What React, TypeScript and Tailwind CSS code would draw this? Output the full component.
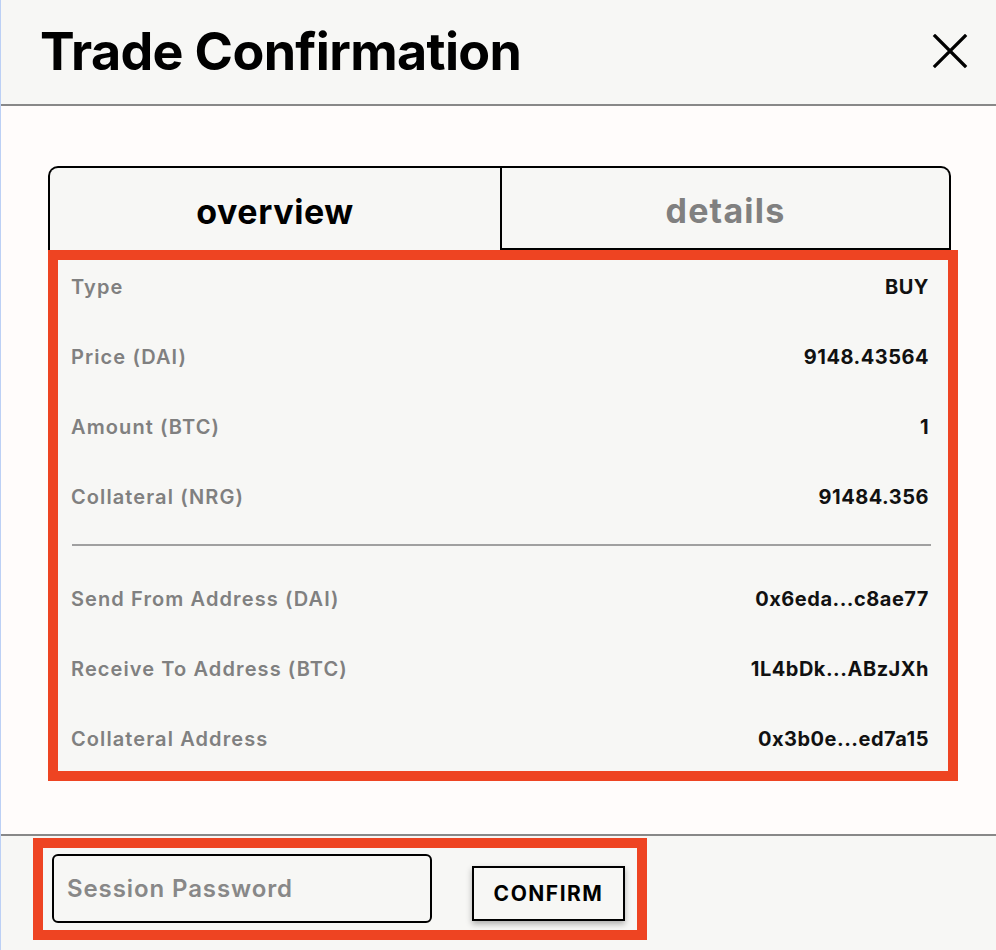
import React from 'react';

const rows = [
  { label: 'Type', value: 'BUY' },
  { label: 'Price (DAI)', value: '9148.43564' },
  { label: 'Amount (BTC)', value: '1' },
  { label: 'Collateral (NRG)', value: '91484.356' },
];

const addressRows = [
  { label: 'Send From Address (DAI)', value: '0x6eda...c8ae77' },
  { label: 'Receive To Address (BTC)', value: '1L4bDk...ABzJXh' },
  { label: 'Collateral Address', value: '0x3b0e...ed7a15' },
];

function Row({ label, value }: { label: string; value: string }) {
  return (
    <div className="h-[54px] flex items-center justify-between pl-[13px] pr-[19px]">
      <span className="text-[20px] font-semibold tracking-[1.1px] text-[#808080]">{label}</span>
      <span className="text-[20px] font-bold tracking-[0.5px] text-[#111]">{value}</span>
    </div>
  );
}

export default function App() {
  return (
    <div className="w-[996px] h-[950px] bg-[#fffcfb] border-l border-[#bcd0f5] flex flex-col font-['Inter',sans-serif] text-black">
      {/* header */}
      <div className="h-[106px] shrink-0 bg-[#f7f7f5] border-b-2 border-[#888] flex items-center justify-between pl-[39px] pr-[28px]">
        <h1 className="text-[52px] font-bold tracking-[-0.65px] leading-none">Trade Confirmation</h1>
        <svg width="36" height="36" viewBox="0 0 36 36">
          <path d="M3 2 L33 32 M33 2 L3 32" stroke="#000" strokeWidth="3.2" strokeLinecap="square" fill="none" />
        </svg>
      </div>

      {/* body */}
      <div className="flex-1 pt-[60px] pl-[47px]">
        <div className="w-[903px] h-[84px] flex">
          <div className="w-[454px] h-full pt-[4px] bg-[#f7f7f5] border-2 border-b-0 border-black rounded-tl-[10px] flex items-center justify-center">
            <span className="text-[34px] font-bold tracking-[0.6px]">overview</span>
          </div>
          <div className="flex-1 h-full pt-[4px] bg-[#f7f7f5] border-2 border-l-0 border-black rounded-tr-[10px] flex items-center justify-center">
            <span className="text-[34px] font-bold tracking-[1.2px] text-[#808080]">details</span>
          </div>
        </div>

        <div className="w-[910px] h-[531px] border-[10px] border-[#ee4422] bg-[#f7f7f5] flex flex-col">
          <div className="flex flex-col gap-[16px]">
            {rows.map((r) => (
              <Row key={r.label} {...r} />
            ))}
          </div>
          <div className="mt-[20px] ml-[14px] mr-[17px] h-[2px] bg-[#a0a0a0]" />
          <div className="mt-[26px] flex flex-col gap-[16px]">
            {addressRows.map((r) => (
              <Row key={r.label} {...r} />
            ))}
          </div>
        </div>
      </div>

      {/* footer */}
      <div className="h-[116px] shrink-0 bg-[#f7f7f5] border-t-2 border-[#888] pt-[2px] pl-[32px]">
        <div className="w-[614px] h-[102px] border-[10px] border-[#ee4422] flex items-start pl-[9px] pt-[6px]">
          <div className="w-[380px] h-[69px] border-2 border-black rounded-[6px] bg-[#f7f7f5] flex items-center pl-[13px]">
            <span className="text-[24px] font-semibold tracking-[0.9px] text-[#888]">Session Password</span>
          </div>
          <button className="ml-[40px] mt-[12px] w-[153px] h-[55px] border-2 border-black bg-[#f7f7f5] shadow-[0_3px_6px_rgba(0,0,0,0.3)] flex items-center justify-center">
            <span className="text-[21px] font-bold tracking-[1.5px]">CONFIRM</span>
          </button>
        </div>
      </div>
    </div>
  );
}
